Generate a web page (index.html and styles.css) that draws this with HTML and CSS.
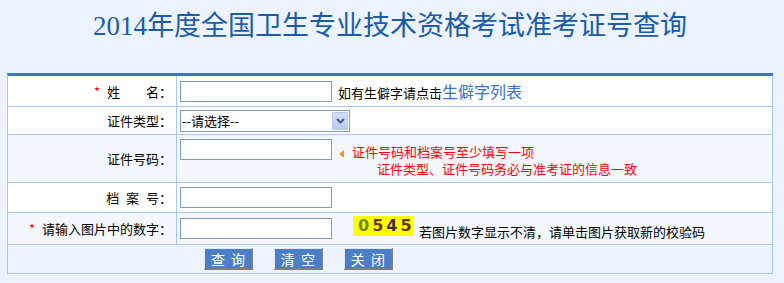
FILE: index.html
```html
<!DOCTYPE html>
<html lang="zh-CN">
<head>
    <meta charset="UTF-8">
    <title>准考证号查询</title>
    <link rel="stylesheet" href="styles.css">
</head>
<body>
    <h1 class="title"><span class="digits">2014</span>年度全国卫生专业技术资格考试准考证号查询</h1>
    <table class="query-table">
        <tr class="row-name">
            <td class="label"><span class="req">*</span> 姓　　名：</td>
            <td class="field">
                <div class="line">
                    <input class="text-input" type="text">
                    <span class="tip">如有生僻字请点击<a class="rare-link" href="#">生僻字列表</a></span>
                </div>
            </td>
        </tr>
        <tr class="row-type">
            <td class="label">证件类型：</td>
            <td class="field">
                <div class="select-box">
                    <select class="select">
                        <option>--请选择--</option>
                        <option>身份证</option>
                        <option>军官证</option>
                    </select>
                    <span class="select-btn">
                        <svg width="9" height="6" viewBox="0 0 9 6"><path d="M1 1 L4.5 4.5 L8 1" fill="none" stroke="#4a5d82" stroke-width="2"/></svg>
                    </span>
                </div>
            </td>
        </tr>
        <tr class="row-id alt">
            <td class="label">证件号码：</td>
            <td class="field top">
                <div class="line">
                    <input class="text-input first" type="text">
                    <div class="notes">
                        <div class="note-first"><span class="arrow"></span>证件号码和档案号至少填写一项</div>
                        <div class="note-second">证件类型、证件号码务必与准考证的信息一致</div>
                    </div>
                </div>
            </td>
        </tr>
        <tr class="row-file">
            <td class="label spaced">档 案 号：</td>
            <td class="field"><input class="text-input" type="text"></td>
        </tr>
        <tr class="row-code alt">
            <td class="label"><span class="req">*</span> 请输入图片中的数字：</td>
            <td class="field">
                <div class="line">
                    <input class="text-input" type="text">
                    <span class="captcha"><b class="c1">0</b><b class="c2">5</b><b class="c3">4</b><b class="c4">5</b></span>
                    <span class="code-tip">若图片数字显示不清，请单击图片获取新的校验码</span>
                </div>
            </td>
        </tr>
        <tr class="row-buttons">
            <td class="buttons" colspan="2">
                <button class="btn">查 询</button>
                <button class="btn">清 空</button>
                <button class="btn">关 闭</button>
            </td>
        </tr>
    </table>
</body>
</html>
```

FILE: styles.css
```css
body {
    margin: 0;
    background-color: #edf3fc;
    font-family: "Noto Sans CJK SC", sans-serif;
    font-size: 13px;
    color: #000;
}
.title {
    margin: 0;
    width: 780px;
    height: 73px;
    padding-top: 6px;
    box-sizing: border-box;
    text-align: center;
    font-size: 27px;
    line-height: 36px;
    font-weight: normal;
    color: #1a5ca8;
}
.digits {
    font-family: "Liberation Serif", serif;
}
.query-table {
    margin-left: 7px;
    width: 766px;
    border-collapse: separate;
    border-spacing: 0;
    border-left: 1px solid #a9c8ef;
    border-top: 3px solid #3a76c2;
    table-layout: fixed;
}
.query-table td {
    border-right: 1px solid #a9c8ef;
    border-bottom: 1px solid #a9c8ef;
    padding: 0;
    background: #fff;
    vertical-align: middle;
}
.query-table tr.alt td {
    background: #f4f8fe;
}
.row-name { height: 31px; }
.row-type { height: 28px; }
.row-id { height: 48px; }
.row-file { height: 30px; }
.row-code { height: 32px; }
.row-buttons { height: 29px; }
.label {
    width: 169px;
    box-sizing: border-box;
    text-align: right;
    padding-right: 4px !important;
    white-space: nowrap;
}
.label.spaced {
    word-spacing: 4px;
}
.req {
    color: #f00;
    margin-right: 4px;
}
.field {
    padding-left: 3px !important;
}
.field.top {
    vertical-align: top !important;
    padding-top: 4px !important;
}
.line {
    display: flex;
    align-items: center;
}
.text-input {
    width: 152px;
    height: 21px;
    box-sizing: border-box;
    border: 1px solid #7f9db9;
    margin: 0;
    padding: 0 2px;
    background: #fff;
    font-family: inherit;
    font-size: 13px;
}
.text-input.first {
    align-self: flex-start;
}
.tip {
    margin-left: 6px;
    white-space: nowrap;
}
.rare-link {
    color: #3b70c2;
    font-size: 16px;
    text-decoration: none;
}
.select-box {
    display: inline-flex;
    align-items: center;
    width: 170px;
    height: 22px;
    box-sizing: border-box;
    border: 1px solid #7f9db9;
    background: #fff;
    vertical-align: middle;
}
.select {
    flex: 1;
    min-width: 0;
    height: 20px;
    border: none;
    outline: none;
    margin: 0;
    padding: 0 0 0 1px;
    background: transparent;
    appearance: none;
    -webkit-appearance: none;
    font-family: inherit;
    font-size: 13px;
}
.select-btn {
    display: flex;
    align-items: center;
    justify-content: center;
    width: 16px;
    height: 18px;
    margin-right: 1px;
    box-sizing: border-box;
    border: 1px solid #b7c9ee;
    border-radius: 1px;
    background: linear-gradient(#d3e0fb, #b7cbf3);
}
.notes {
    margin-left: 7px;
    align-self: flex-start;
    padding-top: 4px;
    color: #f00;
    line-height: 17px;
    white-space: nowrap;
}
.arrow {
    display: inline-block;
    width: 0;
    height: 0;
    border-top: 4px solid transparent;
    border-bottom: 4px solid transparent;
    border-right: 5px solid #f7941d;
    margin-right: 8px;
    vertical-align: -1px;
}
.note-second {
    padding-left: 38px;
}
.captcha {
    display: inline-block;
    width: 60px;
    height: 20px;
    margin-left: 21px;
    margin-top: -5px;
    padding-left: 5px;
    box-sizing: border-box;
    background: #ffff00;
    font-family: "DejaVu Sans", sans-serif;
    font-size: 16px;
    line-height: 20px;
    letter-spacing: 3px;
    cursor: pointer;
}
.captcha b {
    font-weight: bold;
}
.c1 { color: #6c8c2a; }
.c2 { color: #6a3c16; }
.c3 { color: #4a2a4a; }
.c4 { color: #5c3812; }
.code-tip {
    margin-left: 6px;
    margin-top: 6px;
    white-space: nowrap;
}
.query-table tr.row-buttons td {
    background: #edf3fc;
}
.buttons {
    padding-left: 196px !important;
}
.btn {
    width: 49px;
    height: 22px;
    margin: 0 18px 0 0;
    padding: 0;
    box-sizing: border-box;
    background: #4a7fc8;
    color: #fff;
    border-top: 1px solid #dfe8f6;
    border-left: 1px solid #dfe8f6;
    border-right: 2px solid #7d7d7d;
    border-bottom: 2px solid #7d7d7d;
    font-family: inherit;
    font-size: 14px;
    line-height: 18px;
    word-spacing: 3px;
    cursor: pointer;
}
```
